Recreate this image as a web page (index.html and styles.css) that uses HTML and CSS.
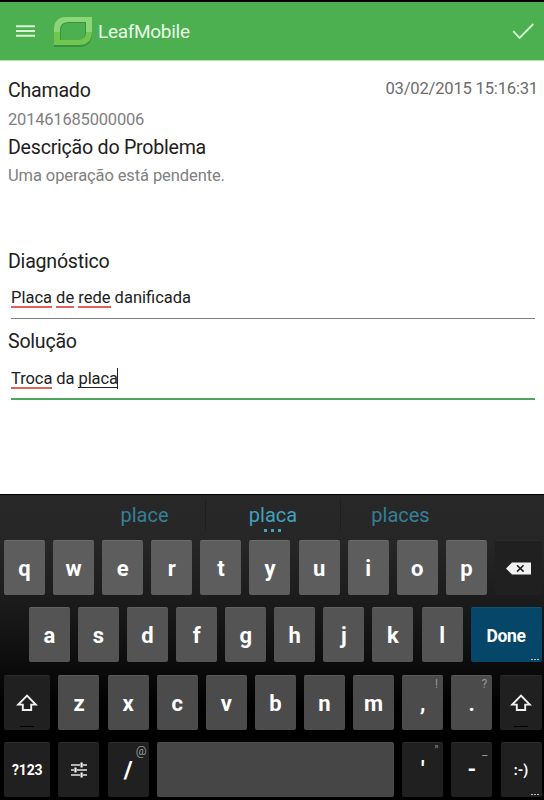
FILE: index.html
```html
<!DOCTYPE html>
<html lang="pt-BR">
<head>
  <meta charset="UTF-8">
  <meta name="viewport" content="width=device-width, initial-scale=1.0">
  <title>LeafMobile</title>
  <link rel="stylesheet" href="styles.css">
</head>
<body>
  <header class="app-bar">
    <svg class="menu-icon" width="19" height="12" viewBox="0 0 19 12">
      <path d="M0 1.2h19M0 6h19M0 10.8h19" stroke="#d9f5d6" stroke-width="2"/>
    </svg>
    <svg class="logo" width="40" height="32" viewBox="0 0 40 32">
      <path d="M1 31V15Q1 2 14 2H39V17Q39 31 26 31Z M8 25V14Q8 7 15 7H32V17Q32 25 24 25Z" fill="#3b9142" fill-rule="evenodd"/>
      <path d="M1 29V14Q1 1 14 1H39V15Q39 29 26 29Z M7 24V14Q7 6 15 6H33V16Q33 24 25 24Z" fill="#71c64e" fill-rule="evenodd"/>
      <path d="M1 16V14Q1 1 14 1H39V16H33V6H15Q7 6 7 14V16Z" fill="#8bd676"/>
    </svg>
    <h1 class="title">LeafMobile</h1>
    <svg class="check-icon" width="23" height="17" viewBox="0 0 23 17">
      <path d="M1.2 8.2L7.6 14.8L21.3 1" fill="none" stroke="#d4f7d0" stroke-width="1.9"/>
    </svg>
  </header>

  <main class="form">
    <div class="row">
      <h2>Chamado</h2>
      <span class="date">03/02/2015 15:16:31</span>
    </div>
    <p class="number">201461685000006</p>
    <h2 class="problem-title">Descrição do Problema</h2>
    <p class="problem">Uma operação está pendente.</p>

    <h2 class="diag-title">Diagnóstico</h2>
    <div class="field"><span class="typo">Placa</span> <span class="typo">de</span> <span class="typo">rede</span> danificada</div>
    <h2 class="solution-title">Solução</h2>
    <div class="field active"><span class="typo">Troca</span> da <span class="composing">placa</span><span class="cursor"></span></div>
  </main>

  <section class="keyboard">
    <div class="suggestions">
      <span class="word">place</span>
      <span class="word main">placa<i class="more"></i></span>
      <span class="word">places</span>
    </div>

    <div class="keys row1">
      <div class="key">q</div>
      <div class="key">w</div>
      <div class="key">e</div>
      <div class="key">r</div>
      <div class="key">t</div>
      <div class="key">y</div>
      <div class="key">u</div>
      <div class="key">i</div>
      <div class="key">o</div>
      <div class="key">p</div>
      <div class="key dark wide delete">
        <svg width="25" height="13" viewBox="0 0 25 13">
          <path d="M0 6.5L6 .5H25V12.5H6Z" fill="#f2f2f2"/>
          <path d="M11 3.2L17.6 9.6M17.6 3.2L11 9.6" stroke="#222" stroke-width="1.6"/>
        </svg>
      </div>
    </div>

    <div class="keys row2">
      <div class="key">a</div>
      <div class="key">s</div>
      <div class="key">d</div>
      <div class="key">f</div>
      <div class="key">g</div>
      <div class="key">h</div>
      <div class="key">j</div>
      <div class="key">k</div>
      <div class="key">l</div>
      <div class="key done wide">Done<i class="dots"></i></div>
    </div>

    <div class="keys row3">
      <div class="key dark shift">
        <svg width="22" height="18" viewBox="0 0 22 18">
          <path d="M11 1.6L2.2 10.6H6.8V16H15.2V10.6H19.8Z" fill="none" stroke="#f2f2f2" stroke-width="1.9"/>
        </svg>
        <i class="lock"></i>
      </div>
      <div class="key">z</div>
      <div class="key">x</div>
      <div class="key">c</div>
      <div class="key">v</div>
      <div class="key">b</div>
      <div class="key">n</div>
      <div class="key">m</div>
      <div class="key">,<i class="hint">!</i></div>
      <div class="key">.<i class="hint">?</i></div>
      <div class="key dark wide shift">
        <svg width="22" height="18" viewBox="0 0 22 18">
          <path d="M11 1.6L2.2 10.6H6.8V16H15.2V10.6H19.8Z" fill="none" stroke="#f2f2f2" stroke-width="1.9"/>
        </svg>
        <i class="lock"></i>
      </div>
    </div>

    <div class="keys row4">
      <div class="key dark symbols">?123</div>
      <div class="key dark settings">
        <svg width="16" height="16" viewBox="0 0 16 16">
          <path d="M0 3H9M12 3H16M0 8H3M6 8H16M0 13H9M12 13H16" stroke="#e4e4e4" stroke-width="1.5"/>
          <path d="M10.6 .5V5.5M4.5 5.5V10.5M10.6 10.5V15.5" stroke="#f2f2f2" stroke-width="2.2"/>
        </svg>
      </div>
      <div class="key dark slash">/<i class="hint at">@</i></div>
      <div class="key space"></div>
      <div class="key dark">'<i class="hint">"</i></div>
      <div class="key dark">-<i class="hint">_</i></div>
      <div class="key dark smiley">:-)<i class="dots"></i></div>
    </div>
  </section>
</body>
</html>
```
FILE: styles.css
```css
* {
  box-sizing: border-box;
}

body {
  margin: 0;
  height: 800px;
  display: flex;
  flex-direction: column;
  overflow: hidden;
  font-family: Roboto, "Liberation Sans", sans-serif;
  background: #fff;
  color: #212121;
}

h1, h2, p {
  margin: 0;
  font-weight: 400;
}

.app-bar {
  height: 61px;
  flex: none;
  display: flex;
  align-items: center;
  padding: 0 9px 0 16px;
  border-top: 2px solid #000;
  border-bottom: 1px solid #b5e0b5;
  background: #4caf50;
}

.logo {
  margin: 2px 0 0 18px;
}

.title {
  margin-left: 5px;
  padding-top: 1px;
  font-size: 19px;
  letter-spacing: -0.3px;
  color: #e9fbe7;
}

.check-icon {
  margin-left: auto;
}

.form {
  flex: 1;
  padding: 18px 6px 0 8px;
}

h2 {
  font-size: 19.6px;
  line-height: 24px;
  letter-spacing: -0.24px;
}

.row {
  display: flex;
  justify-content: space-between;
}

.date {
  font-size: 16.6px;
  line-height: 20px;
  letter-spacing: -0.2px;
  color: #6c6c6c;
}

.number,
.problem {
  font-size: 16.5px;
  line-height: 20px;
  letter-spacing: -0.1px;
  color: #808080;
}

.number {
  margin-top: 7px;
  letter-spacing: -0.2px;
}

.problem-title {
  margin-top: 6px;
}

.problem {
  margin-top: 6px;
}

.diag-title {
  margin-top: 64px;
}

.field {
  height: 45px;
  margin: 0 3px;
  padding-top: 14px;
  font-size: 16.5px;
  line-height: 20px;
  border-bottom: 1px solid #7d7f83;
}

.solution-title {
  margin-top: 11px;
}

.field.active {
  height: 46px;
  border-bottom: 2px solid #4fa45b;
  letter-spacing: -0.08px;
}

.typo {
  display: inline-block;
  height: 20px;
  border-bottom: 2px solid #e0625f;
}

.composing {
  display: inline-block;
  height: 19px;
  border-bottom: 1px solid #212121;
}

.cursor {
  display: inline-block;
  width: 1px;
  height: 21px;
  margin-left: -1px;
  background: #212121;
  vertical-align: -5px;
}

.keyboard {
  height: 306px;
  flex: none;
  border-top: 1px solid #000;
  background: linear-gradient(#282828 0, #262626 48px, #1c1c1c 102px, #101010 155px, #000 215px);
}

.suggestions {
  height: 45px;
  padding: 4px 76px 0 84px;
  display: grid;
  grid-template-columns: 121px 136px 119px;
}

.word {
  height: 32px;
  text-align: center;
  font-size: 20px;
  line-height: 32px;
  color: #367f96;
}

.word.main {
  position: relative;
  color: #42a1bf;
  border-left: 1px solid #1f1f1f;
  border-right: 1px solid #1f1f1f;
}

/* three dots below the middle suggestion */
.more {
  position: absolute;
  left: 50%;
  top: 30px;
  width: 17px;
  height: 3px;
  margin-left: -9px;
  background: repeating-linear-gradient(90deg, #42a1bf 0 3px, transparent 3px 7px);
}

.keys {
  display: flex;
  gap: 8.1px;
  height: 55px;
  margin-bottom: 12.3px;
  padding: 0 2.5px 0 4px;
}

.keys.row2 {
  padding-left: 28.8px;
}

.key {
  position: relative;
  width: 41px;
  flex: none;
  display: flex;
  align-items: center;
  justify-content: center;
  padding-top: 1px;
  border-radius: 2px;
  background: #5d5d5d;
  border-top: 1px solid #6b6b6b;
  color: #fff;
  font-size: 22px;
  font-weight: 700;
}

.row2 .key {
  background: #545454;
  border-top-color: #616161;
}

.row3 .key {
  background: #4b4b4b;
  border-top-color: #5b5b5b;
}

.row4 .key {
  padding-top: 0;
  background: #464646;
  border-top-color: #4e4e4e;
}

.keys .key.dark {
  background: #202020;
  border-top-color: #2b2b2b;
}

.keys .key.done {
  background: #064668;
  border-top-color: #10557a;
  font-size: 17.5px;
  letter-spacing: -0.3px;
}

.key.wide,
.key.space {
  flex: 1;
}

.key.delete,
.key.shift,
.key.settings {
  padding: 0;
}

.key.shift:first-child {
  width: 46.4px;
}

.key.symbols {
  width: 46.4px;
  font-size: 14px;
  letter-spacing: -0.2px;
}

.key.slash {
  font-size: 24px;
}

.key.smiley {
  font-size: 14px;
}

/* small symbol in the corner of a key */
.hint {
  position: absolute;
  top: 1px;
  right: 5px;
  font-size: 12px;
  font-style: normal;
  font-weight: 400;
  line-height: 14px;
  color: #959595;
}

.hint.at {
  right: 2px;
}

.dots {
  position: absolute;
  right: 3px;
  bottom: 2px;
  width: 8px;
  height: 1px;
  background: repeating-linear-gradient(90deg, #bbb 0 2px, transparent 2px 3px);
}

.lock {
  position: absolute;
  left: 50%;
  bottom: 3px;
  width: 14px;
  height: 1px;
  margin-left: -7px;
  background: #000;
}
```
